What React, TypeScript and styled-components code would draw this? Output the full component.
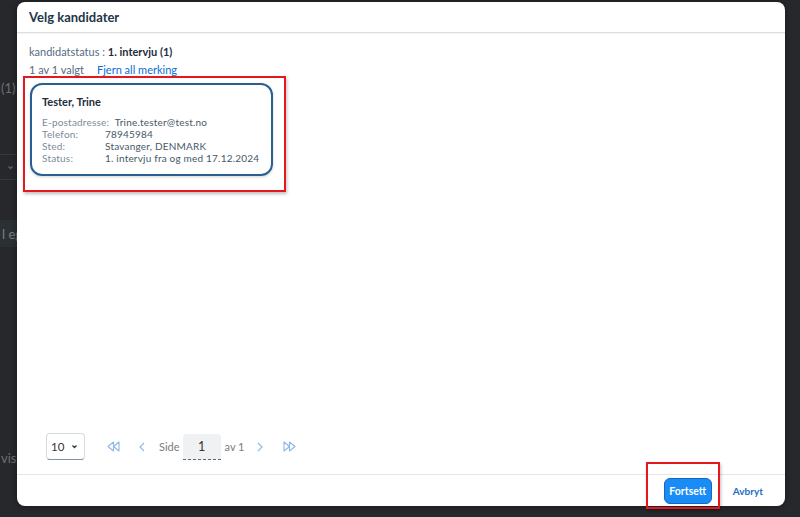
import styled, { createGlobalStyle } from "styled-components"

const Global = createGlobalStyle`
  html, body { margin: 0; padding: 0; }
  body {
    background: #26282b;
    font-family: Lato, "Noto Sans", "Liberation Sans", Arial, sans-serif;
    overflow: hidden;
  }
`

const Screen = styled.div`
  position: relative;
  width: 800px;
  height: 517px;
  background: #26282b;
  overflow: hidden;
`

// the dimmed page that sits behind the dialog
const GhostPage = styled.div`
  display: flex;
  flex-direction: column;
  width: 17px;
  padding-top: 80px;
  color: #6c7075;
  font-size: 13px;
`
const GhostText = styled.div<{ $top: number; $left?: number }>`
  margin-top: ${(p) => p.$top}px;
  margin-left: ${(p) => p.$left ?? 0}px;
  white-space: nowrap;
  line-height: 16px;
`
const GhostSelect = styled.div`
  margin-top: 58px;
  height: 24px;
  border-top: 1px solid #35383c;
  border-bottom: 1px solid #35383c;
  display: flex;
  align-items: center;
  justify-content: flex-end;
  padding-right: 3px;
  color: #5d6166;
`
const GhostBand = styled.div`
  margin-top: 40px;
  height: 27px;
  background: #2b3035;
  display: flex;
  align-items: center;
  padding-left: 2px;
  color: #7a7f85;
  white-space: nowrap;
`

const Dialog = styled.div`
  position: absolute;
  left: 17px;
  top: 2px;
  width: 768px;
  height: 504px;
  background: #fff;
  border-radius: 8px;
  display: flex;
  flex-direction: column;
  box-shadow: 0 0 6px rgba(0, 0, 0, 0.4);
`
const Header = styled.div`
  height: 30px;
  padding: 0 12px;
  display: flex;
  align-items: center;
  border-bottom: 1px solid #dcdfe2;
  box-shadow: 0 1px 0 #f1f2f3;
`
const Title = styled.h1`
  margin: 0;
  font-size: 13px;
  font-weight: 700;
  color: #223548;
`
const Body = styled.div`
  flex: 1;
  display: flex;
  flex-direction: column;
  padding: 12px 12px 0;
`
const Line = styled.div<{ $gap?: number }>`
  font-size: 11px;
  line-height: 14px;
  color: #556b82;
  margin-top: ${(p) => p.$gap ?? 0}px;
  display: flex;
  gap: 13px;
`
const Strong = styled.b`
  color: #1d2d3e;
  font-weight: 700;
`
const LinkText = styled.span`
  color: #0a6ed1;
`
const Marker = styled.div`
  align-self: flex-start;
  margin: -1px 0 0 -6px;
  border: 2px solid #e3191f;
  padding: 5px 11px 14px 5px;
  box-shadow: 1px 2px 3px rgba(0, 0, 0, 0.25);
`
const Card = styled.div`
  width: 219px;
  border: 2px solid #2a5f8f;
  border-radius: 12px;
  padding: 10px;
  box-shadow: 0 1px 3px rgba(0, 0, 0, 0.18);
`
const Name = styled.div`
  font-size: 11px;
  line-height: 14px;
  font-weight: 700;
  color: #1d2d3e;
  margin-bottom: 7px;
`
const Row = styled.div`
  display: flex;
  font-size: 10px;
  letter-spacing: 0.2px;
  line-height: 12px;
  white-space: nowrap;
`
const Label = styled.span`
  min-width: 63px;
  color: #7d8b99;
`
const Value = styled.span`
  color: #475868;
`
const Spacer = styled.div`
  flex: 1;
`
const Pager = styled.div`
  display: flex;
  align-items: center;
  padding-left: 17px;
  margin-bottom: 14px;
  font-size: 11px;
  color: #6a6d70;
`
const PageSize = styled.div`
  width: 39px;
  height: 27px;
  border: 1px solid #d5dadd;
  border-bottom: 1px solid #7f93a8;
  border-radius: 4px;
  display: flex;
  align-items: center;
  justify-content: space-between;
  padding: 0 6px 0 4px;
  box-sizing: border-box;
  color: #32363a;
  font-size: 11.5px;
`
const IconBtn = styled.span<{ $ml: number }>`
  width: 24px;
  height: 24px;
  margin-left: ${(p) => p.$ml}px;
  display: flex;
  align-items: center;
  justify-content: center;
  color: #8cb8e6;
`
const PagerText = styled.span<{ $ml: number }>`
  margin-left: ${(p) => p.$ml}px;
  color: #7a7d80;
`
const PageInput = styled.div`
  margin-left: 3px;
  width: 38px;
  height: 26px;
  background: #eff1f2;
  border-radius: 4px 4px 0 0;
  border-bottom: 1px dashed #556b82;
  box-sizing: border-box;
  display: flex;
  align-items: center;
  justify-content: center;
  color: #32363a;
  font-size: 12.5px;
`
const Footer = styled.div`
  height: 31px;
  border-top: 1px solid #e5e5e5;
  display: flex;
  align-items: center;
  justify-content: flex-end;
  gap: 13px;
  padding-right: 14px;
`
const Marked = styled.div`
  position: relative;
  display: flex;
  &::before {
    content: "";
    position: absolute;
    left: -18px;
    right: -8px;
    top: -16px;
    bottom: -5px;
    border: 2px solid #e3191f;
    box-shadow: 1px 2px 3px rgba(0, 0, 0, 0.25);
    pointer-events: none;
  }
`
const Primary = styled.button`
  height: 26px;
  width: 48px;
  border: 1px solid #1468c4;
  border-radius: 6px;
  background: #1a8cf6;
  color: #fff;
  font-family: inherit;
  font-size: 10.5px;
  font-weight: 700;
  padding: 0;
`
const Ghost = styled.button`
  height: 26px;
  border: none;
  background: transparent;
  color: #1b6fc4;
  font-family: inherit;
  font-size: 10px;
  font-weight: 700;
  padding: 0 8px;
`

const DoubleLeft = () => (
  <svg width="13" height="11" viewBox="0 0 13 11" fill="none" stroke="currentColor" strokeWidth="1.1" strokeLinejoin="round">
    <path d="M6.5 1 L1 5.5 L6.5 10 Z" />
    <path d="M12 1 L6.5 5.5 L12 10 Z" />
  </svg>
)
const DoubleRight = () => (
  <svg width="13" height="11" viewBox="0 0 13 11" fill="none" stroke="currentColor" strokeWidth="1.1" strokeLinejoin="round">
    <path d="M1 1 L6.5 5.5 L1 10 Z" />
    <path d="M6.5 1 L12 5.5 L6.5 10 Z" />
  </svg>
)
const Chevron = ({ dir }: { dir: "left" | "right" | "down" }) => {
  const d = dir === "left" ? "M5 1 L1 5 L5 9" : dir === "right" ? "M1 1 L5 5 L1 9" : "M1.5 1.5 L3.5 3.5 L5.5 1.5"
  const w = dir === "down" ? 7 : 6
  const h = dir === "down" ? 5 : 10
  return (
    <svg width={w} height={h} viewBox={`0 0 ${w} ${h}`} fill="none" stroke="currentColor" strokeWidth={dir === "down" ? 1.3 : 1.1}>
      <path d={d} />
    </svg>
  )
}

const fields = [
  { label: "E-postadresse:\u00a0\u00a0", value: "Trine.tester@test.no" },
  { label: "Telefon:", value: "78945984" },
  { label: "Sted:", value: "Stavanger, DENMARK" },
  { label: "Status:", value: "1. intervju fra og med 17.12.2024" },
]

const App = () => {
  return (
    <Screen>
      <Global />
      <GhostPage>
        <GhostText $top={0} $left={1}>(1)</GhostText>
        <GhostSelect>
          <Chevron dir="down" />
        </GhostSelect>
        <GhostBand>l eg</GhostBand>
        <GhostText $top={203} $left={1}>visis</GhostText>
      </GhostPage>

      <Dialog>
        <Header>
          <Title>Velg kandidater</Title>
        </Header>
        <Body>
          <Line>
            <span>
              kandidatstatus : <Strong>1. intervju (1)</Strong>
            </span>
          </Line>
          <Line $gap={4}>
            <span>1 av 1 valgt</span>
            <LinkText>Fjern all merking</LinkText>
          </Line>
          <Marker>
            <Card>
              <Name>Tester, Trine</Name>
              {fields.map((f) => (
                <Row key={f.value}>
                  <Label>{f.label}</Label>
                  <Value>{f.value}</Value>
                </Row>
              ))}
            </Card>
          </Marker>
          <Spacer />
          <Pager>
            <PageSize>
              <span>10</span>
              <Chevron dir="down" />
            </PageSize>
            <IconBtn $ml={16}>
              <DoubleLeft />
            </IconBtn>
            <IconBtn $ml={5}>
              <Chevron dir="left" />
            </IconBtn>
            <PagerText $ml={5}>Side</PagerText>
            <PageInput>1</PageInput>
            <PagerText $ml={4}>av 1</PagerText>
            <IconBtn $ml={3}>
              <Chevron dir="right" />
            </IconBtn>
            <IconBtn $ml={6}>
              <DoubleRight />
            </IconBtn>
          </Pager>
        </Body>
        <Footer>
          <Marked>
            <Primary>Fortsett</Primary>
          </Marked>
          <Ghost>Avbryt</Ghost>
        </Footer>
      </Dialog>
    </Screen>
  )
}

export default App
